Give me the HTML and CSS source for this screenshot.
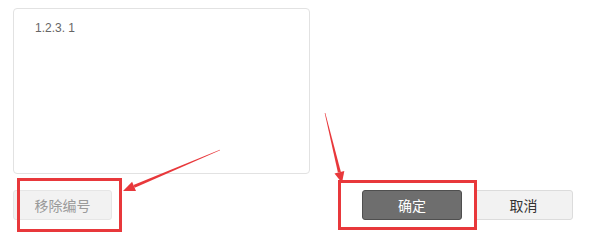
FILE: index.html
```html
<!DOCTYPE html>
<html lang="zh-CN">
<head>
    <meta charset="UTF-8">
    <meta name="viewport" content="width=device-width, initial-scale=1.0">
    <title>编号设置</title>
    <link rel="stylesheet" href="styles.css">
</head>
<body>
    <div class="panel">
        <div class="number-box">1.2.3. 1</div>
        <div class="actions">
            <button class="btn btn-light btn-remove">移除编号</button>
            <div class="right-group">
                <button class="btn btn-dark">确定</button>
                <button class="btn btn-light">取消</button>
            </div>
        </div>
    </div>

    <svg class="marks" width="609" height="247" viewBox="0 0 609 247">
        <rect x="18.5" y="179.5" width="102" height="51" fill="none" stroke="#e8383b" stroke-width="3"/>
        <rect x="339.5" y="181.5" width="136" height="47" fill="none" stroke="#e8383b" stroke-width="3"/>
        <polygon points="220.1,150.3 219.9,149.7 133.5,184.9 134.7,187.7" fill="#e8383b"/>
        <polygon points="123,191 136,190.9 132.1,181.7" fill="#e8383b"/>
        <polygon points="325.3,112.9 324.7,113.1 337.9,172.6 340.9,171.9" fill="#e8383b"/>
        <polygon points="342,183 344.3,171.1 334.5,173.5" fill="#e8383b"/>
    </svg>
</body>
</html>
```

FILE: styles.css
```css
* {
    margin: 0;
    padding: 0;
    box-sizing: border-box;
}

body {
    background: #fff;
    font-family: 'Noto Sans CJK SC', 'Noto Sans', sans-serif;
    position: relative;
    width: 609px;
    height: 247px;
    overflow: hidden;
}

.panel {
    padding: 8px 0 0 13px;
}

.number-box {
    width: 297px;
    height: 166px;
    border: 1px solid #e2e2e2;
    border-radius: 4px;
    padding: 12px 21px;
    font-family: 'Liberation Sans', Arial, sans-serif;
    font-size: 12px;
    line-height: 14px;
    color: #666;
}

.actions {
    display: flex;
    align-items: center;
    width: 560px;
    margin-top: 16px;
}

.right-group {
    display: flex;
    gap: 12px;
    margin-left: auto;
}

.btn {
    width: 99px;
    height: 30px;
    border-radius: 3px;
    font-family: 'Noto Sans CJK SC', sans-serif;
    font-size: 14px;
    line-height: 28px;
    text-align: center;
    cursor: pointer;
}

.btn-light {
    background: #f2f2f2;
    border: 1px solid #dcdcdc;
    color: #333;
}

.btn-remove {
    color: #9a9a9a;
    border-color: #e6e6e6;
}

.btn-dark {
    width: 100px;
    background: #6e6e6e;
    border: 1px solid #4f4f4f;
    color: #fff;
}

.marks {
    position: absolute;
    top: 0;
    left: 0;
    pointer-events: none;
}
```
